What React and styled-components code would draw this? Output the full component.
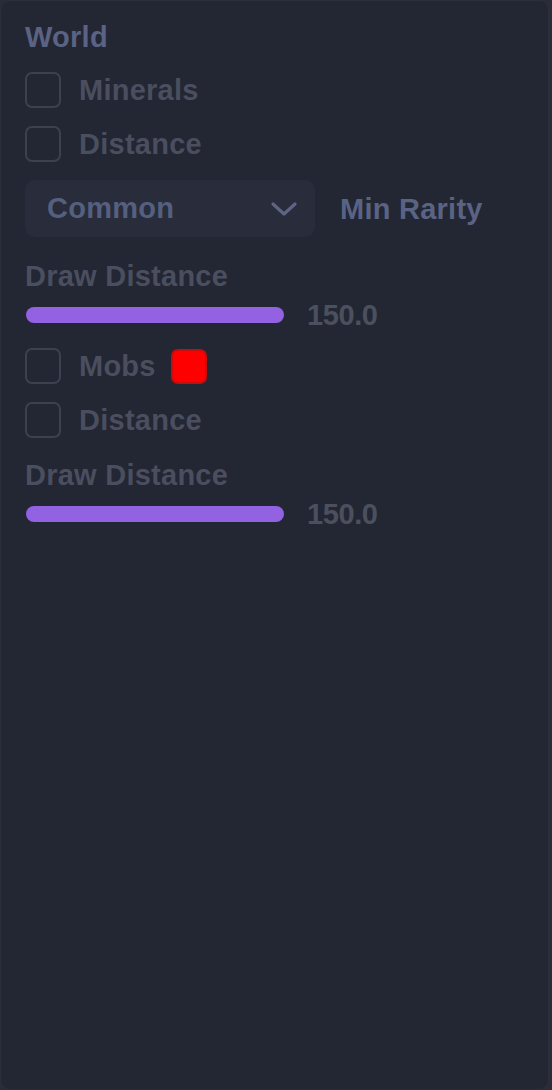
import React, { useState } from "react";
import styled, { createGlobalStyle } from "styled-components";

const GlobalStyle = createGlobalStyle`
  html, body { margin: 0; padding: 0; }
  body {
    background: #2a2d38;
    font-family: "Liberation Sans", Arial, sans-serif;
  }
  * { box-sizing: border-box; }
`;

const Panel = styled.div`
  width: 549px;
  height: 1090px;
  background: #232633;
  border: 1px solid #2b2f3d;
  border-radius: 10px;
  padding: 20px 0 0 24px;
  display: flex;
  flex-direction: column;
  gap: 18px;
  font-weight: 700;
  font-size: 29px;
  letter-spacing: 0.25px;
`;

const Title = styled.div`
  height: 33px;
  line-height: 33px;
  color: #5a6384;
`;

const Row = styled.div`
  display: flex;
  align-items: center;
  height: ${(p) => p.$h || 36}px;
`;

const Box = styled.button`
  width: 36px;
  height: 36px;
  flex: none;
  padding: 0;
  border: 2px solid #3d404e;
  border-radius: 7px;
  background: transparent;
  margin-right: 18px;
  cursor: pointer;
`;

const Label = styled.span`
  line-height: 36px;
  color: ${(p) => (p.$accent ? "#5a6384" : "#4a4e5f")};
  white-space: nowrap;
`;

const Swatch = styled.div`
  width: 36px;
  height: 35px;
  margin-left: 15px;
  border-radius: 7px;
  background: ${(p) => p.$color};
  border: 2px solid #c80b0b;
`;

const Select = styled.div`
  width: 290px;
  height: 57px;
  background: #282c3b;
  border-radius: 10px;
  display: flex;
  align-items: center;
  justify-content: space-between;
  padding: 0 18px 0 22px;
  margin-right: 25px;
  color: #55607f;
`;

const SelectWrap = styled(Row)`
  margin-bottom: 2px;
`;

const SliderBlock = styled.div`
  display: flex;
  flex-direction: column;
  gap: 8px;
  padding-top: 3px;
`;

const SliderLabel = styled.div`
  height: 32px;
  line-height: 32px;
  color: #4a4e5f;
`;

const Track = styled.div`
  width: 258px;
  height: 16px;
  border-radius: 8px;
  background: #9262e2;
  margin-left: 1px;
  margin-right: 23px;
`;

const Value = styled.span`
  color: #4c505e;
  line-height: 30px;
  letter-spacing: -0.4px;
`;

function Check({ label, children }) {
  const [on, setOn] = useState(false);
  return (
    <Row>
      <Box onClick={() => setOn(!on)} aria-pressed={on} />
      <Label>{label}</Label>
      {children}
    </Row>
  );
}

function Slider({ label, value }) {
  return (
    <SliderBlock>
      <SliderLabel>{label}</SliderLabel>
      <Row $h={30}>
        <Track />
        <Value>{value}</Value>
      </Row>
    </SliderBlock>
  );
}

export default function App() {
  return (
    <>
      <GlobalStyle />
      <Panel>
        <Title>World</Title>
        <Check label="Minerals" />
        <Check label="Distance" />
        <SelectWrap $h={57}>
          <Select>
            <span>Common</span>
            <svg width="26" height="16" viewBox="0 0 26 16" fill="none">
              <path d="M2 3 L13 13 L24 3" stroke="#5d6582" strokeWidth="3.2" strokeLinecap="round" strokeLinejoin="round" />
            </svg>
          </Select>
          <Label $accent>Min Rarity</Label>
        </SelectWrap>
        <Slider label="Draw Distance" value="150.0" />
        <Check label="Mobs">
          <Swatch $color="#ff0000" />
        </Check>
        <Check label="Distance" />
        <Slider label="Draw Distance" value="150.0" />
      </Panel>
    </>
  );
}
